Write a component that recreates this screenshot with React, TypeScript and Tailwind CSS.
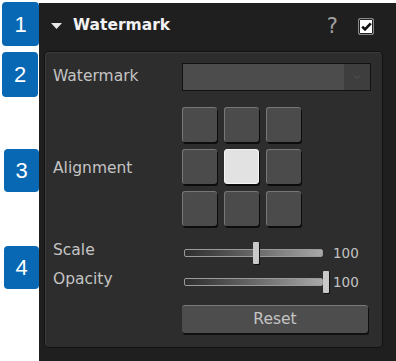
import { ChevronDown } from "lucide-react";

function Badge({ n, className }: { n: string; className: string }) {
  return (
    <div
      className={`flex items-center justify-center rounded-[4px] bg-[#0868b3] text-[22px] text-white ${className}`}
      style={{ fontFamily: "'Liberation Sans', Arial, sans-serif" }}
    >
      {n}
    </div>
  );
}

function Slider({ pos }: { pos: number }) {
  return (
    <div className="relative h-[22px] w-[145px]">
      <div className="absolute left-0 top-[7px] h-[8px] w-[139px] rounded-[2px] border border-[#9a9a9a] bg-gradient-to-r from-[#2e2e2e] to-[#a8a8a8]" />
      <div
        className="absolute top-0 h-[22px] w-[6px] rounded-[1px] bg-[#c9c9c9] shadow-[1px_1px_0_#111]"
        style={{ left: pos }}
      />
    </div>
  );
}

function Cell({ active }: { active?: boolean }) {
  return (
    <div
      className={
        active
          ? "h-[35px] w-[35px] rounded-[3px] border border-[#f4f4f4] bg-[#e2e2e2] shadow-[1px_2px_0_#0c0c0c]"
          : "h-[35px] w-[35px] rounded-[3px] border-t border-l border-[#777] bg-[#4b4b4b] shadow-[1px_2px_0_#0c0c0c]"
      }
    />
  );
}

export default function App() {
  const label = "text-[15.5px] text-[#c4c4c4]";
  return (
    <div
      className="flex h-[361px] w-[396px] overflow-hidden bg-white"
      style={{ fontFamily: "'DejaVu Sans', Verdana, sans-serif" }}
    >
      <div className="flex w-[39px] shrink-0 flex-col">
        <Badge n="1" className="ml-[2px] mt-[2px] h-[44px] w-[37px]" />
        <Badge n="2" className="ml-[2px] mt-[6px] h-[45px] w-[36px]" />
        <Badge n="3" className="ml-[4px] mt-[52px] h-[43px] w-[35px]" />
        <Badge n="4" className="ml-[4px] mt-[54px] h-[43px] w-[35px]" />
      </div>

      <div className="mt-[3px] flex flex-1 flex-col bg-[#1f1f1f]">
        <div className="flex h-[48px] items-center pb-[2px] pl-[12px] pr-[22px]">
          <svg width="11" height="6" viewBox="0 0 11 6" className="mr-[11px]">
            <path d="M0 0 H11 L5.5 6 Z" fill="#e8e8e8" />
          </svg>
          <span className="text-[15.5px] font-bold text-[#f2f2f2]">Watermark</span>
          <span className="ml-auto mr-[20px] text-[21px] leading-none text-[#a0a0a0]">?</span>
          <div className="flex h-[17px] w-[16px] items-center justify-center rounded-[2px] border border-[#888] bg-white shadow-[inset_0_0_0_1px_#222]">
            <svg width="11" height="9" viewBox="0 0 11 9">
              <path d="M1.2 4.6 L4 7.4 L9.8 1.4" stroke="#111" strokeWidth="2.6" fill="none" />
            </svg>
          </div>
        </div>

        <div className="ml-[5px] w-[339px] h-[297px] rounded-[4px] border border-[#121212] bg-[#2d2d2d] px-[8px] pt-[11px] shadow-[inset_1px_1px_0_#3c3c3c]">
          <div className="grid grid-cols-[129px_1fr] items-center">
            <span className={label}>Watermark</span>
            <div className="flex h-[28px] w-[189px] border border-[#111] bg-[#4c4c4c]">
              <div className="flex-1" />
              <div className="flex w-[26px] items-center justify-center bg-[#3e3e3e]">
                <ChevronDown size={12} color="#555" strokeWidth={2} />
              </div>
            </div>
          </div>

          <div className="mt-[16px] grid grid-cols-[129px_1fr] items-center">
            <span className={`${label} mt-[4px]`}>Alignment</span>
            <div className="grid w-[119px] grid-cols-3 gap-[7px]">
              <Cell />
              <Cell />
              <Cell />
              <Cell />
              <Cell active />
              <Cell />
              <Cell />
              <Cell />
              <Cell />
            </div>
          </div>

          <div className="mt-[16px] grid grid-cols-[131px_1fr] items-center">
            <span className={`${label} -mt-[5px]`}>Scale</span>
            <div className="flex items-center">
              <Slider pos={69} />
              <span className="ml-[4px] text-[13.5px] text-[#c4c4c4]">100</span>
            </div>
          </div>

          <div className="mt-[7px] grid grid-cols-[131px_1fr] items-center">
            <span className={`${label} -mt-[4px]`}>Opacity</span>
            <div className="flex items-center">
              <Slider pos={139} />
              <span className="ml-[4px] text-[13.5px] text-[#c4c4c4]">100</span>
            </div>
          </div>

          <div className="mt-[12px] grid grid-cols-[129px_1fr]">
            <span />
            <button className="h-[28px] w-[186px] rounded-[3px] border-t border-[#7a7a7a] bg-[#4d4d4d] text-[15.5px] text-[#c4c4c4] shadow-[1px_2px_0_#101010]">
              Reset
            </button>
          </div>
        </div>
      </div>
    </div>
  );
}
